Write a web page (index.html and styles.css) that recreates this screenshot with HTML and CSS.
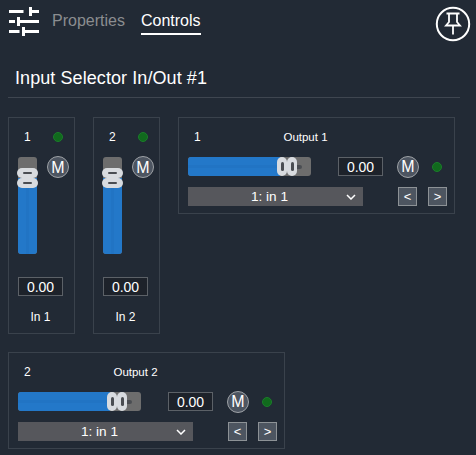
FILE: index.html
```html
<!DOCTYPE html>
<html lang="en">
<head>
<meta charset="utf-8">
<title>Input Selector In/Out #1</title>
<link rel="stylesheet" href="styles.css">
</head>
<body>
<header class="topbar">
  <svg class="sliders-icon" viewBox="0 0 32 32" width="32" height="32" aria-hidden="true">
    <path fill="#fff" d="M1 4h14.500v3H1zM21 1h3v3H31v3h-7v3h-3zM1 14h6v3H1zM9 11h3v3H31v3H12v3H9zM1 24h10.500v3H1zM14 21h3v3H31v3H17v3h-3z"/>
  </svg>
  <nav class="tabs">
    <span class="tab">Properties</span>
    <span class="tab tab-active">Controls</span>
  </nav>
  <svg class="pin-icon" viewBox="0 0 36 36" width="36" height="36" aria-hidden="true">
    <circle cx="18" cy="18" r="16.200" fill="none" stroke="#fff" stroke-width="2"/>
    <path fill="none" stroke="#fff" stroke-width="1.800" d="M11.500 7.500h13M14 7.500v8.500l-3 3.500h14l-3-3.500V7.500M18 19.500V28.500"/>
  </svg>
</header>
<h1 class="title">Input Selector In/Out #1</h1>
<main class="panels">
  <section class="card input-card">
    <div class="input-head"><span class="num">1</span><span class="led"></span></div>
    <div class="input-body">
      <div class="vslider">
        <div class="vtrack"><div class="vfill"></div></div>
        <div class="vthumbs"><span class="vgrip"></span><span class="vgrip"></span></div>
      </div>
      <button class="mute">M</button>
    </div>
    <div class="value">0.00</div>
    <div class="input-name">In 1</div>
  </section>
  <section class="card input-card">
    <div class="input-head"><span class="num">2</span><span class="led"></span></div>
    <div class="input-body">
      <div class="vslider">
        <div class="vtrack"><div class="vfill"></div></div>
        <div class="vthumbs"><span class="vgrip"></span><span class="vgrip"></span></div>
      </div>
      <button class="mute">M</button>
    </div>
    <div class="value">0.00</div>
    <div class="input-name">In 2</div>
  </section>
  <section class="card output-card">
    <div class="output-head"><span class="num">1</span><span class="output-name">Output 1</span></div>
    <div class="output-row">
      <div class="hslider">
        <div class="hfill"></div>
        <span class="hstub"></span>
        <div class="hthumbs"><span class="hgrip"></span><span class="hgrip"></span></div>
      </div>
      <div class="value">0.00</div>
      <button class="mute">M</button>
      <span class="led"></span>
    </div>
    <div class="output-row select-row">
      <div class="select"><span>1: in 1</span>
        <svg class="chevron" viewBox="0 0 10 6" width="10" height="6" aria-hidden="true"><path d="M1 1l4 4 4-4" fill="none" stroke="#fff" stroke-width="1.500"/></svg>
      </div>
      <button class="step">&lt;</button>
      <button class="step">&gt;</button>
    </div>
  </section>
  <section class="card output-card">
    <div class="output-head"><span class="num">2</span><span class="output-name">Output 2</span></div>
    <div class="output-row">
      <div class="hslider">
        <div class="hfill"></div>
        <span class="hstub"></span>
        <div class="hthumbs"><span class="hgrip"></span><span class="hgrip"></span></div>
      </div>
      <div class="value">0.00</div>
      <button class="mute">M</button>
      <span class="led"></span>
    </div>
    <div class="output-row select-row">
      <div class="select"><span>1: in 1</span>
        <svg class="chevron" viewBox="0 0 10 6" width="10" height="6" aria-hidden="true"><path d="M1 1l4 4 4-4" fill="none" stroke="#fff" stroke-width="1.500"/></svg>
      </div>
      <button class="step">&lt;</button>
      <button class="step">&gt;</button>
    </div>
  </section>
</main>
</body>
</html>
```

FILE: styles.css
```css
* { box-sizing: border-box; }

html, body { height: 100%; }

body {
  margin: 0;
  overflow: hidden;
  background: #222a35;
  color: #fff;
  font-family: "Liberation Sans", Arial, sans-serif;
}

.topbar {
  display: flex;
  align-items: flex-start;
  height: 59px;
  padding: 6px 5px 0 8px;
}

.sliders-icon { flex: none; }

.tabs {
  display: flex;
  gap: 16px;
  margin-left: 12px;
  flex: 1;
}

.tab {
  height: 29px;
  padding: 6px 0 0;
  font-size: 16px;
  line-height: 18px;
  color: #8b8d90;
}

.tab-active {
  color: #fff;
  border-bottom: 2px solid #fff;
}

.pin-icon { flex: none; }

.title {
  height: 39px;
  margin: 0 16px 19px 8px;
  padding: 9px 0 0 7px;
  border-bottom: 1px solid #3f4650;
  font-size: 18px;
  font-weight: 400;
  line-height: 21px;
  letter-spacing: 0.08px;
}

.panels {
  display: flex;
  flex-wrap: wrap;
  align-items: flex-start;
  gap: 18px;
  padding-left: 8px;
}

.card { border: 1px solid #3a424c; }

.input-card {
  width: 67px;
  height: 217px;
  padding: 9px 9px 0;
}

.input-head {
  display: flex;
  align-items: center;
  justify-content: space-between;
  height: 20px;
  padding-right: 2px;
  padding-left: 6px;
}

.num {
  font-size: 12px;
  line-height: 20px;
}

.led {
  flex: none;
  width: 10px;
  height: 10px;
  border-radius: 50%;
  border: 1px solid #1a7d2a;
  background: #116a1d;
}

.input-body {
  display: flex;
  justify-content: space-between;
  height: 120px;
  margin-top: 10px;
}

.vslider {
  position: relative;
  flex: none;
  width: 19px;
  height: 97px;
}

.vtrack {
  display: flex;
  align-items: flex-end;
  height: 100%;
  overflow: hidden;
  border-radius: 3px;
  background: #6d6d6d;
}

.vfill {
  width: 100%;
  height: 76px;
  background: linear-gradient(90deg, #2378c9 0 42%, #2174c4 42% 58%, #2378c9 58%);
}

.vthumbs {
  position: absolute;
  top: 11px;
  left: -1px;
  display: flex;
  flex-direction: column;
  width: 21px;
}

.vgrip {
  position: relative;
  height: 10px;
  border-radius: 5px;
  background: #d8dbdf;
}

.vgrip::after {
  content: "";
  position: absolute;
  top: 4px;
  left: 6px;
  width: 9px;
  height: 2px;
  border-radius: 2px;
  background: #4a4d52;
}

.mute {
  flex: none;
  width: 22px;
  height: 22px;
  margin: -1px -4px 0 0;
  padding: 0;
  border: 1.500px solid #9ea2a6;
  border-radius: 50%;
  background: #4d5561;
  color: #fff;
  font-family: inherit;
  font-size: 16px;
  line-height: 19px;
}

.value {
  flex: none;
  width: 45px;
  height: 19px;
  border: 1px solid #5c6167;
  background: #1d222a;
  color: #fff;
  font-size: 14px;
  line-height: 18px;
  text-align: center;
}

.input-name {
  width: 45px;
  margin-top: 11px;
  font-size: 12px;
  line-height: 20px;
  text-align: center;
}

.output-card {
  width: 277px;
  height: 97px;
  padding: 9px 9px 0;
}

.output-head {
  position: relative;
  display: flex;
  justify-content: center;
  height: 20px;
  padding-right: 22px;
}

.output-head .num {
  position: absolute;
  left: 6px;
  top: 0;
}

.output-name {
  font-size: 11.500px;
  line-height: 20px;
}

.output-row {
  display: flex;
  align-items: center;
  height: 19px;
  margin-top: 10px;
}

.hslider {
  position: relative;
  flex: none;
  width: 123px;
  height: 19px;
  border-radius: 3px;
  background: #6d6d6d;
}

.hfill {
  width: 92px;
  height: 100%;
  border-radius: 3px 0 0 3px;
  background: linear-gradient(180deg, #2378c9 0 42%, #2174c4 42% 58%, #2378c9 58%);
}

.hstub {
  position: absolute;
  top: 8px;
  left: 106px;
  width: 8px;
  height: 4px;
  border-radius: 0 2px 2px 0;
  background: #4a4d52;
}

.hthumbs {
  position: absolute;
  top: 0;
  left: 89px;
  display: flex;
  height: 19px;
}

.hgrip {
  position: relative;
  width: 10px;
  height: 100%;
  border-radius: 5px;
  background: #d8dbdf;
}

.hgrip::after {
  content: "";
  position: absolute;
  top: 5px;
  left: 4px;
  width: 3px;
  height: 9px;
  border-radius: 2px;
  background: #4a4d52;
}

.output-row .value { margin-left: 27px; }

.output-row .mute { margin: 0 0 0 14px; }

.output-row .led { margin-left: 13px; }

.select-row { margin-top: 11px; }

.select {
  position: relative;
  flex: none;
  width: 175px;
  height: 19px;
  padding-right: 12px;
  background: #56575c;
  font-size: 13.600px;
  line-height: 19px;
  text-align: center;
}

.chevron {
  position: absolute;
  top: 7px;
  right: 7px;
}

.step {
  flex: none;
  width: 19px;
  height: 19px;
  margin-left: 11px;
  padding: 0;
  border: 1px solid #8d9296;
  background: #4d5560;
  color: #fff;
  font-family: inherit;
  font-size: 13px;
  line-height: 16px;
}

.select + .step { margin-left: 35px; }
```
